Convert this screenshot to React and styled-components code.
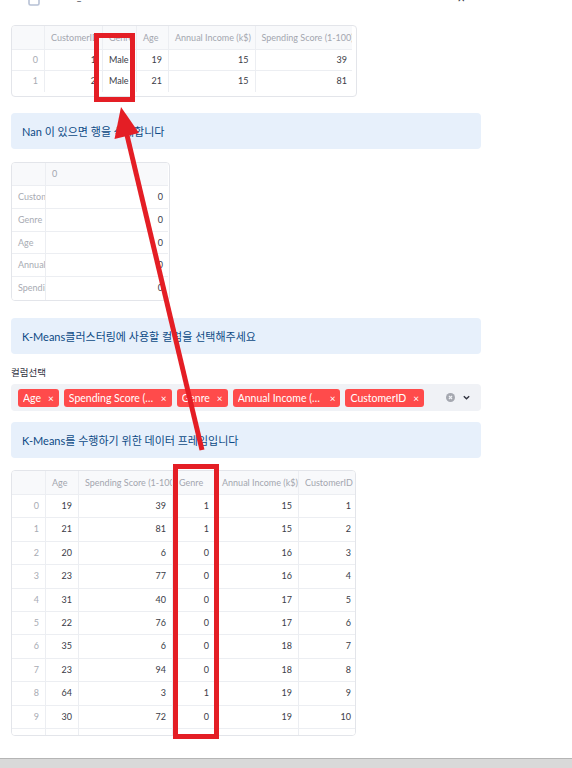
import React from 'react';
import styled, {createGlobalStyle} from 'styled-components';

const GlobalStyle = createGlobalStyle`
html, body {
  margin: 0;
  padding: 0;
  background: #fff;
}
body {
  font-family: "Source Sans Pro", Lato, "Noto Sans CJK KR", sans-serif;
  overflow: hidden;
}
`;

const t1Cols = [
    {label: '', w: 33, kind: 'index'},
    {label: 'CustomerID', w: 58},
    {label: 'Genre', w: 34, align: 'left'},
    {label: 'Age', w: 32},
    {label: 'Annual Income (k$)', w: 86.5},
    {label: 'Spending Score (1-100)', w: 96.5},
];
const t1Rows = [
    [0, 1, 'Male', 19, 15, 39],
    [1, 2, 'Male', 21, 15, 81],
];

const t2Cols = [
    {label: '', w: 34, kind: 'index', align: 'left'},
    {label: '0', w: 122},
];
const t2Rows = [
    ['CustomerID', 0],
    ['Genre', 0],
    ['Age', 0],
    ['Annual Income (k$)', 0],
    ['Spending Score (1-100)', 0],
];

const t3Cols = [
    {label: '', w: 34, kind: 'index'},
    {label: 'Age', w: 33},
    {label: 'Spending Score (1-100)', w: 94},
    {label: 'Genre', w: 43},
    {label: 'Annual Income (k$)', w: 83},
    {label: 'CustomerID', w: 57},
];
const t3Rows = [
    [0, 19, 39, 1, 15, 1],
    [1, 21, 81, 1, 15, 2],
    [2, 20, 6, 0, 16, 3],
    [3, 23, 77, 0, 16, 4],
    [4, 31, 40, 0, 17, 5],
    [5, 22, 76, 0, 17, 6],
    [6, 35, 6, 0, 18, 7],
    [7, 23, 94, 0, 18, 8],
    [8, 64, 3, 1, 19, 9],
    [9, 30, 72, 0, 19, 10],
    ['', '', '', '', '', ''],
];

const tags = ['Age', 'Spending Score (1-100)', 'Genre', 'Annual Income (k$)', 'CustomerID'];

function DataFrame({cols, rows, width, height, headH, rowH, mt}) {
    const template = cols.map(c => c.w + 'px').join(' ');
    return (
        <TableWrap $w={width} $h={height} $mt={mt}>
            <Grid $cols={template}>
                {cols.map((c, i) => (
                    <Cell key={'h' + i} $head $h={headH} $last={i === cols.length - 1} $align="left">
                        {c.label}
                    </Cell>
                ))}
                {rows.map((r, ri) =>
                    r.map((v, ci) => {
                        const c = cols[ci];
                        return (
                            <Cell
                                key={ri + '-' + ci}
                                $h={rowH}
                                $index={c.kind === 'index'}
                                $last={ci === cols.length - 1}
                                $noBottom={ri === rows.length - 1}
                                $align={c.align || (typeof v === 'number' ? 'right' : 'left')}
                            >
                                {v}
                            </Cell>
                        );
                    })
                )}
            </Grid>
        </TableWrap>
    );
}

export default function App() {
    return (
        <Page>
            <GlobalStyle/>
            <Main>
                <FileRow>
                    <FileIcon width="12" height="17" viewBox="0 0 12 17">
                        <rect x="1" y="1" width="10" height="15" rx="1.5" fill="none" stroke="#b7c1d5" strokeWidth="1.6"/>
                    </FileIcon>
                    <FileName>Mall_Customers.csv</FileName>
                    <FileSize>4.0KB</FileSize>
                    <CloseX>×</CloseX>
                </FileRow>

                <DataFrame cols={t1Cols} rows={t1Rows} width={345.5} height={72} headH={24} rowH={21} mt={19}/>

                <InfoBox $mt={16}>Nan 이 있으면 행을 삭제합니다</InfoBox>

                <DataFrame cols={t2Cols} rows={t2Rows} width={159} height={139} headH={23} rowH={22.8} mt={13}/>

                <InfoBox $mt={17}>K-Means클러스터링에 사용할 컬럼을 선택해주세요</InfoBox>

                <Label>컬럼선택</Label>
                <Select>
                    {tags.map(t => (
                        <Tag key={t}>
                            <TagText>{t}</TagText>
                            <TagX>×</TagX>
                        </Tag>
                    ))}
                    <SelectIcons>
                        <svg width="9" height="9" viewBox="0 0 10 10">
                            <circle cx="5" cy="5" r="5" fill="#a5a8b0"/>
                            <path d="M3.3 3.3 L6.7 6.7 M6.7 3.3 L3.3 6.7" stroke="#f0f2f6" strokeWidth="1.3"/>
                        </svg>
                        <svg width="9" height="9" viewBox="0 0 10 10">
                            <path d="M2 3.5 L5 6.5 L8 3.5" fill="none" stroke="#31333f" strokeWidth="1.5"/>
                        </svg>
                    </SelectIcons>
                </Select>

                <InfoBox $mt={11}>K-Means를 수행하기 위한 데이터 프레임입니다</InfoBox>

                <DataFrame cols={t3Cols} rows={t3Rows} width={345} height={266} headH={24} rowH={23.4} mt={12}/>
            </Main>
            <Footer/>

            <Overlay width="572" height="768" viewBox="0 0 572 768">
                <g fill="none" stroke="#e41e25" strokeWidth="5">
                    <rect x="96.5" y="35.5" width="36" height="64"/>
                    <rect x="175.5" y="466.5" width="41" height="270"/>
                    <line x1="202" y1="450" x2="126.5" y2="133"/>
                </g>
                <polygon points="121,107 139,133 114.5,139" fill="#e41e25"/>
            </Overlay>
        </Page>
    );
}

const Page = styled.div`
position: relative;
width: 572px;
height: 768px;
overflow: hidden;
display: flex;
flex-direction: column;
`;

const Main = styled.div`
display: flex;
flex-direction: column;
width: 470px;
padding-left: 11px;
`;

const FileRow = styled.div`
display: flex;
align-items: flex-end;
height: 30px;
margin-top: -24px;
padding-left: 17px;
font-size: 10px;
color: #31333f;
`;

const FileIcon = styled.svg`
display: block;
`;

const FileName = styled.span`
margin-left: 18px;
margin-bottom: 5px;
line-height: 10px;
`;

const FileSize = styled.span`
margin-left: 10px;
margin-bottom: 5px;
line-height: 10px;
color: #a3a8b4;
font-size: 9px;
`;

const CloseX = styled.span`
margin-left: auto;
margin-right: 16px;
margin-bottom: 2px;
line-height: 12px;
font-size: 13px;
color: #31333f;
`;

const TableWrap = styled.div`
box-sizing: border-box;
width: ${p => p.$w}px;
height: ${p => p.$h}px;
margin-top: ${p => p.$mt}px;
border: 1px solid #e3e5ea;
border-radius: 4px;
overflow: hidden;
background: #fff;
`;

const Grid = styled.div`
display: grid;
grid-template-columns: ${p => p.$cols};
`;

const Cell = styled.div`
box-sizing: border-box;
height: ${p => p.$h}px;
line-height: ${p => p.$h - 1}px;
padding: 0 ${p => (p.$last ? 5 : 6)}px 0 6px;
font-size: 9px;
white-space: nowrap;
overflow: hidden;
text-align: ${p => p.$align};
color: ${p => (p.$head ? '#a3a6af' : p.$index ? '#a8abb3' : '#3a3c47')};
background: ${p => (p.$head ? '#f8f9fb' : '#fff')};
border-right: ${p => (p.$last ? 'none' : '1px solid #eceef2')};
border-bottom: ${p => (p.$noBottom ? 'none' : '1px solid #eceef2')};
`;

const InfoBox = styled.div`
display: flex;
align-items: center;
height: 36px;
margin-top: ${p => p.$mt}px;
padding: 0 11px;
border-radius: 4px;
background: #e7f0fb;
color: #0d4a85;
font-size: 11px;
`;

const Label = styled.div`
margin-top: 12px;
height: 12px;
line-height: 12px;
font-size: 9.5px;
color: #31333f;
font-family: "Noto Sans CJK KR", sans-serif;
`;

const Select = styled.div`
display: flex;
align-items: center;
gap: 5px;
height: 27px;
margin-top: 6px;
padding: 0 10px 0 7px;
border-radius: 4px;
background: #f0f2f6;
`;

const Tag = styled.div`
display: flex;
align-items: center;
gap: 7px;
height: 18px;
padding: 0 5px;
border-radius: 3px;
background: #ff4b4b;
color: #fff;
font-size: 10.5px;
`;

const TagText = styled.span`
max-width: 85px;
overflow: hidden;
white-space: nowrap;
text-overflow: ellipsis;
`;

const TagX = styled.span`
font-size: 10px;
`;

const SelectIcons = styled.div`
display: flex;
align-items: center;
gap: 7px;
margin-left: auto;
`;

const Footer = styled.div`
margin-top: auto;
height: 9px;
border-top: 1px solid #b5b5b5;
background: #d9d9d9;
`;

const Overlay = styled.svg`
position: absolute;
top: 0;
left: 0;
pointer-events: none;
`;
